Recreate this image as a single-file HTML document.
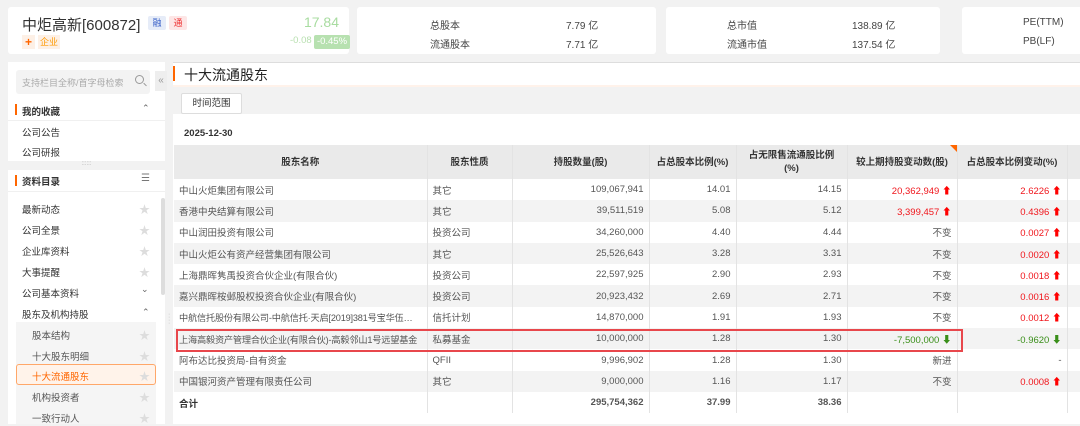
<!DOCTYPE html>
<html><head><meta charset="utf-8"><style>
*{margin:0;padding:0;box-sizing:border-box}
body{width:1080px;height:424px;overflow:hidden;background:#f2f2f2;font-family:"Liberation Sans","Noto Sans CJK SC",sans-serif;font-size:10px;color:#333;position:relative}
.abs{position:absolute}
.card{position:absolute;top:7px;height:47px;background:#fff;border-radius:3px}
.lbl{position:absolute;font-size:10px;color:#444}
.sb{position:absolute;left:8px;top:62px;width:157px;height:362px;background:#fff}
.it{position:absolute;left:22px;font-size:9.5px;color:#333}
.star{position:absolute;left:139px;color:#ddd;font-size:11px}
table{border-collapse:collapse;position:absolute;left:174px;top:145px;table-layout:fixed;width:906px}
td,th{height:21.3px;font-size:9.5px;padding:0 5px;border-right:1px solid #e3e3e3;white-space:nowrap;overflow:hidden;vertical-align:middle}
th{background:#eaeaea;height:34px;font-weight:bold;color:#333;text-align:center;line-height:13px;white-space:normal}
td{text-align:right;color:#555}
td.l{text-align:left;text-overflow:ellipsis;padding:0 1px 0 5px}
td.n{font-size:9.2px;letter-spacing:-0.2px}
tr:nth-child(odd) td{background:#f3f3f3}
.r{color:#f0161c}.g{color:#3a8f1a}
.up{color:#f00;font-weight:bold}.dn{color:#3a8f1a;font-weight:bold}
</style></head><body>
<div class="card" style="left:8px;width:341px">
 <div class="abs" style="left:14px;top:7px;font-size:15px;color:#333">中炬高新[600872]</div>
 <div class="abs" style="left:140px;top:9px;width:18px;height:14px;background:#e6ecf8;color:#3b62c8;font-size:9px;text-align:center;line-height:14px;border-radius:2px">融</div>
 <div class="abs" style="left:161px;top:9px;width:18px;height:14px;background:#fde6e6;color:#e33;font-size:9px;text-align:center;line-height:14px;border-radius:2px">通</div>
 <div class="abs" style="left:14px;top:28px;width:13px;height:14px;background:#fdf0e6;color:#f60;font-size:12px;text-align:center;line-height:14px;font-weight:bold">+</div>
 <div class="abs" style="left:30px;top:28px;width:22px;height:14px;background:#fdf0e6;color:#f90;font-size:9px;text-align:center;line-height:14px">企业</div>
 <div class="abs" style="right:10px;top:7px;font-size:14px;color:#a8dca0">17.84</div>
 <div class="abs" style="left:282px;top:28px;font-size:9.5px;color:#b8e0b0">-0.08</div>
 <div class="abs" style="left:306px;top:28px;width:36px;height:14px;background:#b7e1b0;color:#fff;font-size:9.5px;text-align:center;line-height:14px;border-radius:2px">-0.45%</div>
</div>
<div class="card" style="left:357px;width:299px">
 <div class="lbl" style="left:73px;top:10px">总股本</div><div class="lbl" style="left:209px;top:10px">7.79 亿</div>
 <div class="lbl" style="left:73px;top:29px">流通股本</div><div class="lbl" style="left:209px;top:29px">7.71 亿</div>
</div>
<div class="card" style="left:666px;width:274px">
 <div class="lbl" style="left:61px;top:10px">总市值</div><div class="lbl" style="left:186px;top:10px">138.89 亿</div>
 <div class="lbl" style="left:61px;top:29px">流通市值</div><div class="lbl" style="left:186px;top:29px">137.54 亿</div>
</div>
<div class="card" style="left:962px;width:130px">
 <div class="lbl" style="left:61px;top:10px">PE(TTM)</div>
 <div class="lbl" style="left:61px;top:29px">PB(LF)</div>
</div>

<div class="sb"></div>
<div class="abs" style="left:16px;top:70px;width:134px;height:24px;background:#f3f3f3;border-radius:3px"></div>
<div class="abs" style="left:22px;top:76px;font-size:9px;color:#aaa">支持栏目全称/首字母检索</div>
<div class="abs" style="left:135px;top:75px;width:9px;height:9px;border:1.2px solid #999;border-radius:50%"></div>
<div class="abs" style="left:143px;top:84px;width:4px;height:1.2px;background:#999;transform:rotate(45deg)"></div>
<div class="abs" style="left:155px;top:71px;width:12px;height:20px;background:#eee;color:#999;font-size:10px;text-align:center;line-height:20px">«</div>
<div class="abs" style="left:15px;top:104px;width:2px;height:11px;background:#f60"></div>
<div class="abs" style="left:22px;top:104px;font-size:9.5px;font-weight:bold">我的收藏</div>
<div class="abs" style="left:142px;top:103px;color:#666;font-size:9px">⌃</div>
<div class="abs" style="left:8px;top:120px;width:157px;height:1px;background:#f0f0f0"></div>
<div class="it" style="top:125px">公司公告</div>
<div class="it" style="top:145px">公司研报</div>
<div class="abs" style="left:8px;top:161px;width:157px;height:9px;background:#f2f2f2;color:#aaa;font-size:6px;text-align:center;line-height:7px">::::::</div>
<div class="abs" style="left:15px;top:175px;width:2px;height:11px;background:#f60"></div>
<div class="abs" style="left:22px;top:174px;font-size:9.5px;font-weight:bold">资料目录</div>
<div class="abs" style="left:141px;top:173px;color:#777;font-size:10px">☰</div>
<div class="abs" style="left:8px;top:191px;width:157px;height:1px;background:#f0f0f0"></div>
<div class="abs" style="left:161px;top:198px;width:4px;height:97px;background:#ddd;border-radius:2px"></div>
<div class="it" style="top:202px">最新动态</div><div class="star" style="top:201px">★</div>
<div class="it" style="top:223px">公司全景</div><div class="star" style="top:222px">★</div>
<div class="it" style="top:244px">企业库资料</div><div class="star" style="top:243px">★</div>
<div class="it" style="top:265px">大事提醒</div><div class="star" style="top:264px">★</div>
<div class="it" style="top:286px">公司基本资料</div><div class="abs" style="left:141px;top:284px;color:#666;font-size:9px">⌄</div>
<div class="it" style="top:307px">股东及机构持股</div><div class="abs" style="left:142px;top:307px;color:#666;font-size:9px">⌃</div>
<div class="abs" style="left:16px;top:322px;width:140px;height:102px;background:#f5f5f5"></div>
<div class="it" style="left:32px;top:328px;color:#555">股本结构</div><div class="star" style="top:327px">★</div>
<div class="it" style="left:32px;top:349px;color:#555">十大股东明细</div><div class="star" style="top:348px">★</div>
<div class="abs" style="left:16px;top:364px;width:140px;height:21px;background:#fff3ea;border:1px solid #ffa769;border-radius:3px"></div>
<div class="it" style="left:32px;top:369px;color:#f60">十大流通股东</div><div class="star" style="top:368px">★</div>
<div class="it" style="left:32px;top:390px;color:#555">机构投资者</div><div class="star" style="top:389px">★</div>
<div class="it" style="left:32px;top:411px;color:#555">一致行动人</div><div class="star" style="top:410px">★</div>
<div class="abs" style="left:168px;top:313px;color:#bbb;font-size:7px;line-height:3px">·<br>·<br>·<br>·</div>

<div class="abs" style="left:173px;top:62px;width:907px;height:362px;background:#fff;border-top:1px solid #ddd"></div>
<div class="abs" style="left:173px;top:66px;width:2px;height:15px;background:#f60"></div>
<div class="abs" style="left:184px;top:65px;font-size:14px;color:#222">十大流通股东</div>
<div class="abs" style="left:173px;top:85px;width:907px;height:2px;background:#fff2ea"></div>
<div class="abs" style="left:173px;top:87px;width:907px;height:27px;background:#f2f2f2"></div>
<div class="abs" style="left:181px;top:93px;width:61px;height:21px;background:#fff;border:1px solid #ddd;border-radius:2px;font-size:9.5px;text-align:center;line-height:19px">时间范围</div>
<div class="abs" style="left:184px;top:128px;font-size:9.5px;font-weight:bold">2025-12-30</div>
<table>
<colgroup><col style="width:253px"><col style="width:85px"><col style="width:137px"><col style="width:87px"><col style="width:111px"><col style="width:110px"><col style="width:110px"><col style="width:13px"></colgroup>
<tr><th>股东名称</th><th>股东性质</th><th>持股数量(股)</th><th>占总股本比例(%)</th><th>占无限售流通股比例<br>(%)</th><th>较上期持股变动数(股)</th><th>占总股本比例变动(%)</th><th></th></tr>
<tr><td class="l">中山火炬集团有限公司</td><td class="l">其它</td><td>109,067,941</td><td>14.01</td><td>14.15</td><td class="r">20,362,949 <span class="up">⬆</span></td><td class="r">2.6226 <span class="up">⬆</span></td><td></td></tr>
<tr><td class="l">香港中央结算有限公司</td><td class="l">其它</td><td>39,511,519</td><td>5.08</td><td>5.12</td><td class="r">3,399,457 <span class="up">⬆</span></td><td class="r">0.4396 <span class="up">⬆</span></td><td></td></tr>
<tr><td class="l">中山润田投资有限公司</td><td class="l">投资公司</td><td>34,260,000</td><td>4.40</td><td>4.44</td><td>不变</td><td class="r">0.0027 <span class="up">⬆</span></td><td></td></tr>
<tr><td class="l">中山火炬公有资产经营集团有限公司</td><td class="l">其它</td><td>25,526,643</td><td>3.28</td><td>3.31</td><td>不变</td><td class="r">0.0020 <span class="up">⬆</span></td><td></td></tr>
<tr><td class="l">上海鼎晖隽禹投资合伙企业(有限合伙)</td><td class="l">投资公司</td><td>22,597,925</td><td>2.90</td><td>2.93</td><td>不变</td><td class="r">0.0018 <span class="up">⬆</span></td><td></td></tr>
<tr><td class="l">嘉兴鼎晖桉邺股权投资合伙企业(有限合伙)</td><td class="l">投资公司</td><td>20,923,432</td><td>2.69</td><td>2.71</td><td>不变</td><td class="r">0.0016 <span class="up">⬆</span></td><td></td></tr>
<tr><td class="l n">中航信托股份有限公司-中航信托·天启[2019]381号宝华伍…</td><td class="l">信托计划</td><td>14,870,000</td><td>1.91</td><td>1.93</td><td>不变</td><td class="r">0.0012 <span class="up">⬆</span></td><td></td></tr>
<tr><td class="l n">上海高毅资产管理合伙企业(有限合伙)-高毅邻山1号远望基金</td><td class="l">私募基金</td><td>10,000,000</td><td>1.28</td><td>1.30</td><td class="g">-7,500,000 <span class="dn">⬇</span></td><td class="g">-0.9620 <span class="dn">⬇</span></td><td></td></tr>
<tr><td class="l">阿布达比投资局-自有资金</td><td class="l">QFII</td><td>9,996,902</td><td>1.28</td><td>1.30</td><td>新进</td><td>-</td><td></td></tr>
<tr><td class="l">中国银河资产管理有限责任公司</td><td class="l">其它</td><td>9,000,000</td><td>1.16</td><td>1.17</td><td>不变</td><td class="r">0.0008 <span class="up">⬆</span></td><td></td></tr>
<tr><td class="l" style="font-weight:bold;color:#333">合计</td><td></td><td style="font-weight:bold">295,754,362</td><td style="font-weight:bold">37.99</td><td style="font-weight:bold">38.36</td><td></td><td></td><td></td></tr>
</table>
<div class="abs" style="left:950px;top:145px;width:0;height:0;border-top:7px solid #f60;border-left:7px solid transparent"></div>
<div class="abs" style="left:176px;top:329px;width:787px;height:23px;border:2px solid #e8474c"></div>
</body></html>
